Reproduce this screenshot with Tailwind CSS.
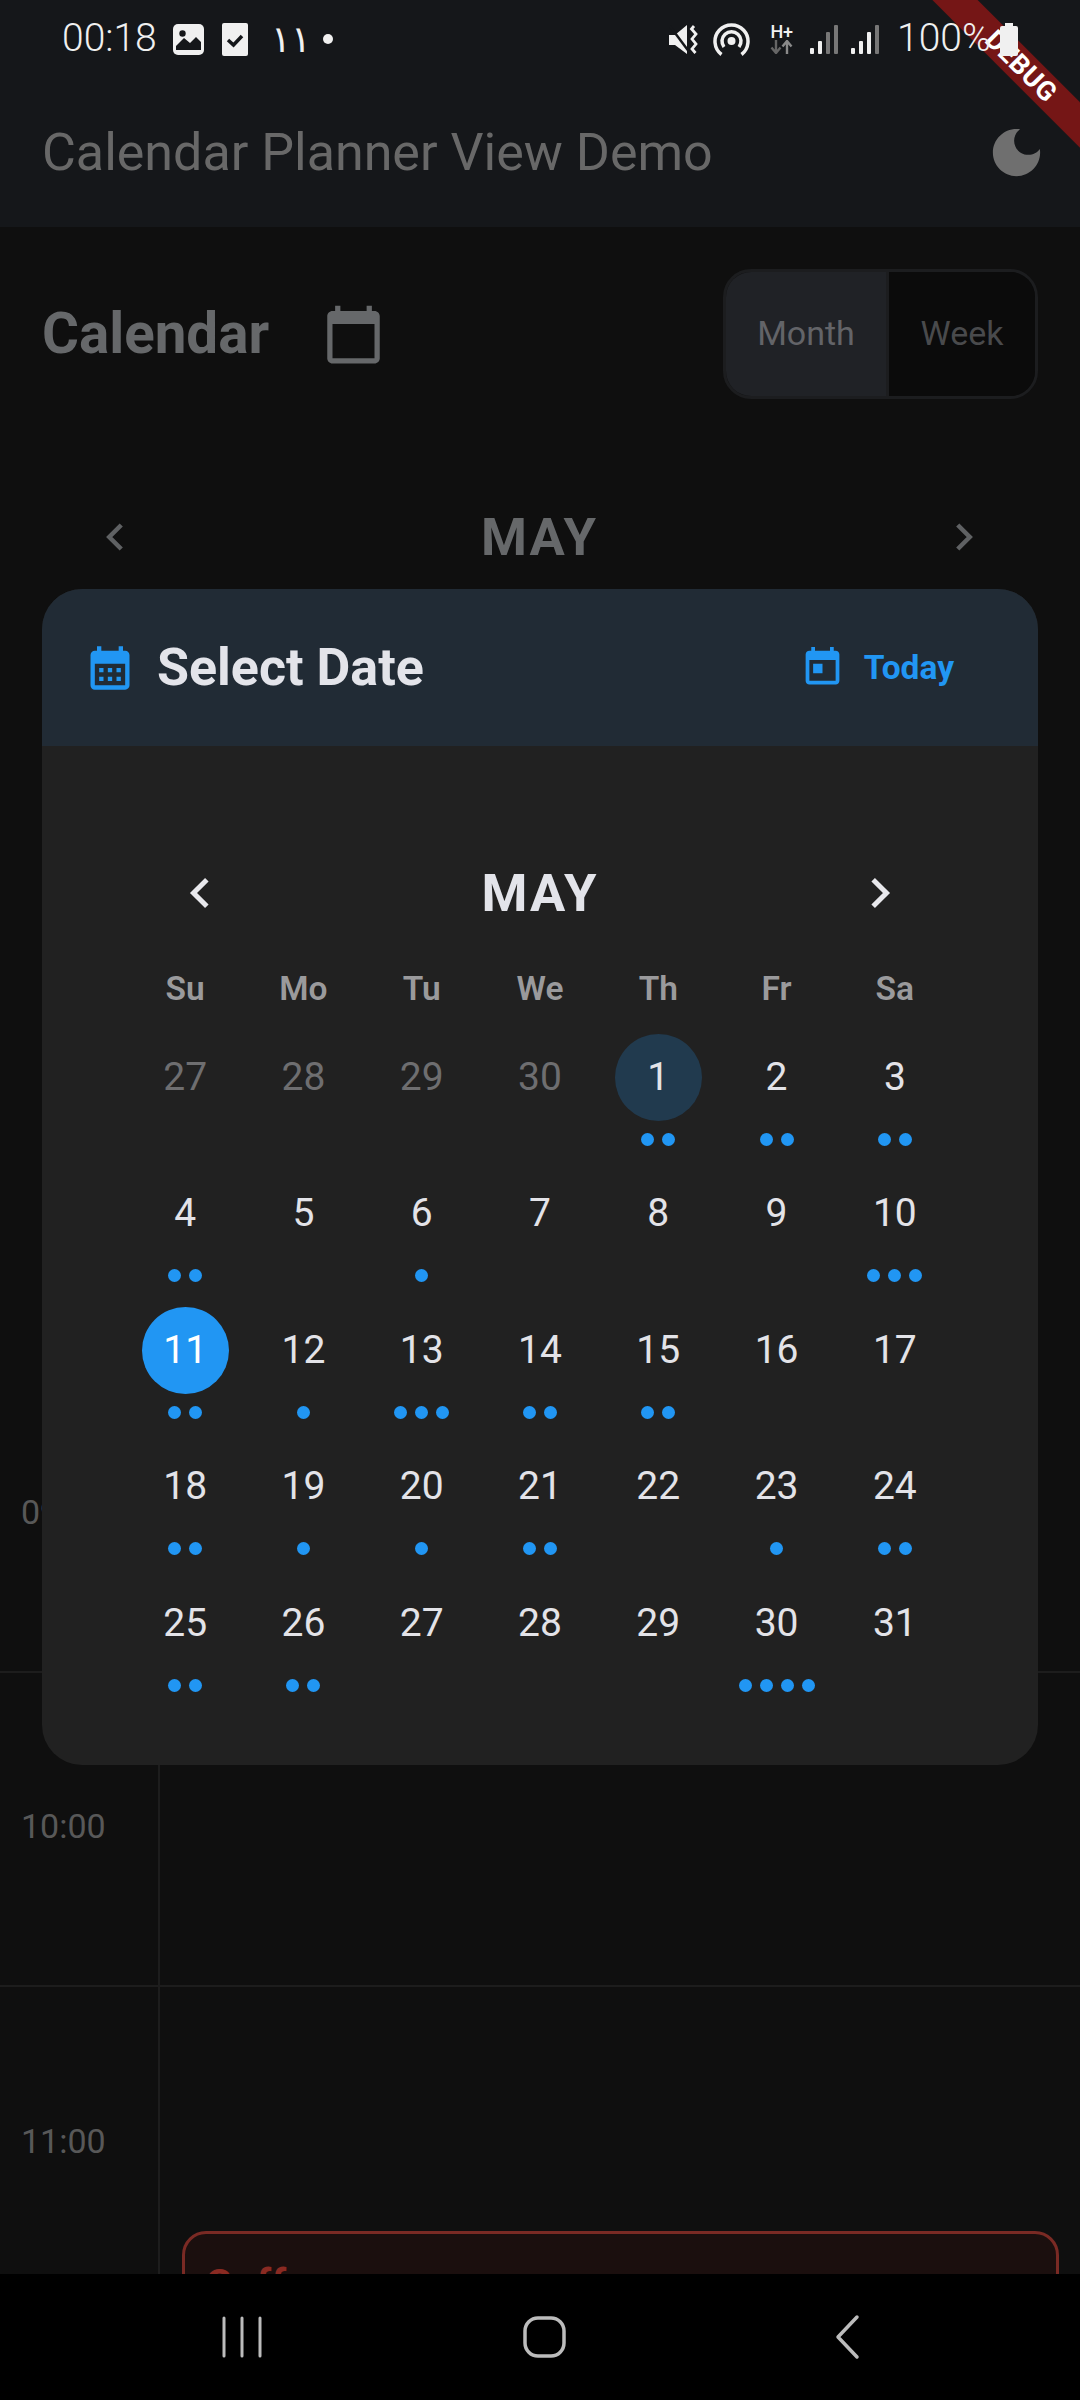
<!doctype html>
<html>
<head>
<meta charset="utf-8">
<script src="https://cdn.jsdelivr.net/npm/@tailwindcss/browser@4"></script>
</head>
<body class="bg-[#0e0e0e]">
<div class="relative w-[1080px] h-[2400px] overflow-hidden flex flex-col bg-[#0f0f0f] font-['Roboto',sans-serif]">

  <!-- status + app bar -->
  <div class="bg-[#15171a] h-[227px] shrink-0 flex flex-col">
    <div class="relative z-20 h-[78px] flex items-center justify-between pl-[62px] text-[#f0f0f0]">
      <div class="flex items-center">
        <span class="text-[39px] leading-none font-light w-[95px] mt-[-2px]">00:18</span>
        <svg class="ml-[16px]" width="31" height="31" viewBox="0 0 31 31"><rect width="31" height="31" rx="5" fill="#f0f0f0"/><path d="M3 26 V22 L11 14 L17 19 L23 13 L28 18 V26 Z" fill="#15171a"/><circle cx="9.5" cy="9.5" r="3.2" fill="#15171a"/></svg>
        <svg class="ml-[18px]" width="26" height="33" viewBox="0 0 26 33"><rect width="26" height="33" rx="2" fill="#f0f0f0"/><path d="M6 17 L11.5 22 L20 13" fill="none" stroke="#15171a" stroke-width="3.5"/></svg>
        <span class="ml-[23px] w-[30px] text-[37px] leading-none font-extralight tracking-[-5px] font-['DejaVu_Sans',sans-serif]">١١</span>
        <span class="ml-[22px] w-[10px] h-[10px] rounded-full bg-[#f0f0f0]"></span>
      </div>
      <div class="flex items-center mr-[62px]">
        <svg width="29" height="29" viewBox="0 0 29 29"><path d="M0 10 H6 L18 0 V29 L6 20 H0 Z" fill="#f0f0f0"/><path d="M0 0 L21 28" stroke="#15171a" stroke-width="2.5"/><path d="M25 1 L22.5 4 L27 9 L23 14 L27 19 L23 24 L26.5 28" fill="none" stroke="#f0f0f0" stroke-width="2.8"/></svg>
        <svg class="ml-[15px]" width="37" height="33" viewBox="0 0 37 33"><circle cx="18.5" cy="18" r="4" fill="#f0f0f0"/><path d="M11 24 A9.5 9.5 0 1 1 26 24" fill="none" stroke="#f0f0f0" stroke-width="3.5"/><path d="M8.5 31.5 A16.5 16.5 0 1 1 28.5 31.5" fill="none" stroke="#f0f0f0" stroke-width="3.5"/></svg>
        <div class="ml-[20px] w-[23px] flex flex-col items-center">
          <span class="text-[18px] leading-[16px] font-medium text-[#f0f0f0] tracking-[-0.5px]">H+</span>
          <svg width="23" height="14" viewBox="0 0 23 14"><path d="M6 0 V12 M1.5 7.5 L6 13 L10.5 7.5" fill="none" stroke="#666" stroke-width="2.4"/><path d="M17 14 V2 M12.5 6.5 L17 1 L21.5 6.5" fill="none" stroke="#8a8a8a" stroke-width="2.4"/></svg>
        </div>
        <svg class="ml-[17px]" width="28" height="29" viewBox="0 0 28 29"><rect x="0" y="23" width="4" height="6" rx="1" fill="#f0f0f0"/><rect x="8" y="16" width="4" height="13" rx="1" fill="#f0f0f0"/><rect x="16" y="7" width="4" height="22" rx="1" fill="#777"/><rect x="24" y="0" width="4" height="29" rx="1" fill="#777"/></svg>
        <svg class="ml-[13px]" width="28" height="29" viewBox="0 0 28 29"><rect x="0" y="23" width="4" height="6" rx="1" fill="#f0f0f0"/><rect x="8" y="16" width="4" height="13" rx="1" fill="#f0f0f0"/><rect x="16" y="7" width="4" height="22" rx="1" fill="#f0f0f0"/><rect x="24" y="0" width="4" height="29" rx="1" fill="#777"/></svg>
        <span class="ml-[18px] text-[39px] leading-none font-light w-[91px] mt-[-2px] whitespace-nowrap">100%</span>
        <svg class="ml-[12px]" width="18" height="33" viewBox="0 0 18 33"><path d="M5 0 H13 V3 H16 A2 2 0 0 1 18 5 V31 A2 2 0 0 1 16 33 H2 A2 2 0 0 1 0 31 V5 A2 2 0 0 1 2 3 H5 Z" fill="#f0f0f0"/></svg>
      </div>
    </div>
    <div class="h-[149px] flex items-center justify-between pl-[42px] pr-[32px]">
      <span class="text-[52px] leading-none text-[#686868] mt-[1px]">Calendar Planner View Demo</span>
      <svg width="63" height="63" viewBox="0 0 24 24" fill="#6f6f6f"><path d="M12 3c-4.97 0-9 4.03-9 9s4.03 9 9 9 9-4.03 9-9c0-.46-.04-.92-.1-1.36-.98 1.37-2.58 2.26-4.4 2.26-2.98 0-5.4-2.42-5.4-5.4 0-1.81.89-3.42 2.26-4.4-.44-.06-.9-.1-1.36-.1z"/></svg>
    </div>
  </div>

  <!-- calendar heading -->
  <div class="h-[130px] mt-[42px] shrink-0 flex items-center justify-between px-[42px]">
    <div class="flex items-center">
      <span class="text-[56.5px] leading-none font-bold text-[#66686a]">Calendar</span>
      <svg class="ml-[53px]" width="63" height="63" viewBox="0 0 24 24" fill="#66686a"><path d="M20 3h-1V1h-2v2H7V1H5v2H4c-1.1 0-2 .9-2 2v16c0 1.1.9 2 2 2h16c1.1 0 2-.9 2-2V5c0-1.1-.9-2-2-2zm0 18H4V8h16v13z"/></svg>
    </div>
    <div class="w-[315px] h-[130px] flex rounded-[28px] border-[3px] border-[#1c1d1f] overflow-hidden">
      <div class="w-[163px] pb-[2px] flex items-center justify-center bg-[#202226] text-[34px] text-[#636468] border-r-[3px] border-[#1c1d1f]">Month</div>
      <div class="flex-1 pb-[2px] flex items-center justify-center bg-[#0b0b0b] text-[34px] text-[#494a4c]">Week</div>
    </div>
  </div>

  <!-- month nav behind dialog -->
  <div class="h-[70px] mt-[103px] shrink-0 flex items-center justify-between pl-[98px] pr-[99px]">
    <svg width="36" height="36" viewBox="0 0 24 24" fill="none" stroke="#5f6163" stroke-width="3"><path d="M15.5 4 L7.5 12 L15.5 20"/></svg>
    <span class="text-[52.5px] leading-none font-bold tracking-[2px] text-[#66686a]">MAY</span>
    <svg width="36" height="36" viewBox="0 0 24 24" fill="none" stroke="#5f6163" stroke-width="3"><path d="M8.5 4 L16.5 12 L8.5 20"/></svg>
  </div>

  <!-- timeline -->
  <div class="mt-[787px] shrink-0">
    <div class="flex h-[314px] border-b-[2px] border-[#1d1d1d]">
      <div class="w-[160px] pb-[5px] border-r-[2px] border-[#1d1d1d] flex items-center pl-[21px] text-[34px] text-[#585858]">09:00</div>
      <div class="flex-1"></div>
    </div>
    <div class="flex h-[314px] border-b-[2px] border-[#1d1d1d]">
      <div class="w-[160px] pb-[5px] border-r-[2px] border-[#1d1d1d] flex items-center pl-[21px] text-[34px] text-[#585858]">10:00</div>
      <div class="flex-1"></div>
    </div>
    <div class="relative flex h-[314px]">
      <div class="w-[160px] pb-[5px] border-r-[2px] border-[#1d1d1d] flex items-center pl-[21px] text-[34px] text-[#585858]">11:00</div>
      <div class="flex-1"></div>
      <div class="absolute left-[182px] top-[244px] w-[877px] h-[120px] rounded-[24px] border-[3px] border-[#7a2a24] bg-[#1b0f0e] pl-[20px] pt-[26px] text-[42px] leading-[50px] font-semibold text-[#8a2a22]">Coffee</div>
    </div>
  </div>

  <!-- dialog -->
  <div class="absolute left-[42px] top-[589px] w-[996px] h-[1176px] rounded-[40px] overflow-hidden bg-[#212121] flex flex-col">
    <div class="h-[157px] shrink-0 bg-[#212b35] flex items-center justify-between pl-[42px] pr-[84px]">
      <div class="flex items-center">
        <svg width="52" height="52" viewBox="0 0 24 24" fill="#2196f3"><path d="M19 4h-1V2h-2v2H8V2H6v2H5c-1.11 0-1.99.9-1.99 2L3 20a2 2 0 0 0 2 2h14c1.1 0 2-.9 2-2V6c0-1.1-.9-2-2-2zm0 16H5V10h14v10zM9 14H7v-2h2v2zm4 0h-2v-2h2v2zm4 0h-2v-2h2v2zm-8 4H7v-2h2v2zm4 0h-2v-2h2v2zm4 0h-2v-2h2v2z"/></svg>
        <span class="ml-[21px] text-[52px] leading-none font-bold text-[#e3e4ea]">Select Date</span>
      </div>
      <div class="flex items-center">
        <svg width="45" height="45" viewBox="0 0 24 24" fill="#2196f3"><path d="M19 3h-1V1h-2v2H8V1H6v2H5c-1.11 0-1.99.9-1.99 2L3 19c0 1.1.89 2 2 2h14c1.1 0 2-.9 2-2V5c0-1.1-.9-2-2-2zm0 16H5V8h14v11zM7 10h5v5H7z"/></svg>
        <span class="ml-[19px] text-[33.5px] leading-none font-bold text-[#2196f3]">Today</span>
      </div>
    </div>
    <div class="flex flex-col pt-[105px] px-[84px]">
      <div class="h-[84px] flex items-center justify-between pl-[55px] pr-[55px]">
        <svg width="40" height="40" viewBox="0 0 24 24" fill="none" stroke="#e8e8ec" stroke-width="3"><path d="M15.5 4 L7.5 12 L15.5 20"/></svg>
        <span class="text-[52.5px] leading-none font-bold tracking-[2px] text-[#e3e4ea]">MAY</span>
        <svg width="40" height="40" viewBox="0 0 24 24" fill="none" stroke="#e8e8ec" stroke-width="3"><path d="M8.5 4 L16.5 12 L8.5 20"/></svg>
      </div>
      <div class="mt-[26px] h-[56px] grid grid-cols-7 items-center text-center text-[33.5px] font-semibold text-[#9a9a9c]">
        <span>Su</span><span>Mo</span><span>Tu</span><span>We</span><span>Th</span><span>Fr</span><span>Sa</span>
      </div>
      <div class="mt-[16.5px] grid grid-cols-7 auto-rows-[136.5px] text-[39px] font-normal text-[#e3e3e8]">
        <!-- row 1 -->
        <div class="flex flex-col items-center"><div class="w-[87px] h-[87px] flex items-center justify-center text-[#6e6e70]">27</div></div>
        <div class="flex flex-col items-center"><div class="w-[87px] h-[87px] flex items-center justify-center text-[#6e6e70]">28</div></div>
        <div class="flex flex-col items-center"><div class="w-[87px] h-[87px] flex items-center justify-center text-[#6e6e70]">29</div></div>
        <div class="flex flex-col items-center"><div class="w-[87px] h-[87px] flex items-center justify-center text-[#6e6e70]">30</div></div>
        <div class="flex flex-col items-center"><div class="w-[87px] h-[87px] rounded-full bg-[#213a4e] flex items-center justify-center">1</div><div class="mt-[12px] flex gap-[8px]"><i class="w-[13px] h-[13px] rounded-full bg-[#2196f3]"></i><i class="w-[13px] h-[13px] rounded-full bg-[#2196f3]"></i></div></div>
        <div class="flex flex-col items-center"><div class="w-[87px] h-[87px] flex items-center justify-center">2</div><div class="mt-[12px] flex gap-[8px]"><i class="w-[13px] h-[13px] rounded-full bg-[#2196f3]"></i><i class="w-[13px] h-[13px] rounded-full bg-[#2196f3]"></i></div></div>
        <div class="flex flex-col items-center"><div class="w-[87px] h-[87px] flex items-center justify-center">3</div><div class="mt-[12px] flex gap-[8px]"><i class="w-[13px] h-[13px] rounded-full bg-[#2196f3]"></i><i class="w-[13px] h-[13px] rounded-full bg-[#2196f3]"></i></div></div>
        <!-- row 2 -->
        <div class="flex flex-col items-center"><div class="w-[87px] h-[87px] flex items-center justify-center">4</div><div class="mt-[12px] flex gap-[8px]"><i class="w-[13px] h-[13px] rounded-full bg-[#2196f3]"></i><i class="w-[13px] h-[13px] rounded-full bg-[#2196f3]"></i></div></div>
        <div class="flex flex-col items-center"><div class="w-[87px] h-[87px] flex items-center justify-center">5</div></div>
        <div class="flex flex-col items-center"><div class="w-[87px] h-[87px] flex items-center justify-center">6</div><div class="mt-[12px] flex gap-[8px]"><i class="w-[13px] h-[13px] rounded-full bg-[#2196f3]"></i></div></div>
        <div class="flex flex-col items-center"><div class="w-[87px] h-[87px] flex items-center justify-center">7</div></div>
        <div class="flex flex-col items-center"><div class="w-[87px] h-[87px] flex items-center justify-center">8</div></div>
        <div class="flex flex-col items-center"><div class="w-[87px] h-[87px] flex items-center justify-center">9</div></div>
        <div class="flex flex-col items-center"><div class="w-[87px] h-[87px] flex items-center justify-center">10</div><div class="mt-[12px] flex gap-[8px]"><i class="w-[13px] h-[13px] rounded-full bg-[#2196f3]"></i><i class="w-[13px] h-[13px] rounded-full bg-[#2196f3]"></i><i class="w-[13px] h-[13px] rounded-full bg-[#2196f3]"></i></div></div>
        <!-- row 3 -->
        <div class="flex flex-col items-center"><div class="w-[87px] h-[87px] rounded-full bg-[#2196f3] text-white flex items-center justify-center">11</div><div class="mt-[12px] flex gap-[8px]"><i class="w-[13px] h-[13px] rounded-full bg-[#2196f3]"></i><i class="w-[13px] h-[13px] rounded-full bg-[#2196f3]"></i></div></div>
        <div class="flex flex-col items-center"><div class="w-[87px] h-[87px] flex items-center justify-center">12</div><div class="mt-[12px] flex gap-[8px]"><i class="w-[13px] h-[13px] rounded-full bg-[#2196f3]"></i></div></div>
        <div class="flex flex-col items-center"><div class="w-[87px] h-[87px] flex items-center justify-center">13</div><div class="mt-[12px] flex gap-[8px]"><i class="w-[13px] h-[13px] rounded-full bg-[#2196f3]"></i><i class="w-[13px] h-[13px] rounded-full bg-[#2196f3]"></i><i class="w-[13px] h-[13px] rounded-full bg-[#2196f3]"></i></div></div>
        <div class="flex flex-col items-center"><div class="w-[87px] h-[87px] flex items-center justify-center">14</div><div class="mt-[12px] flex gap-[8px]"><i class="w-[13px] h-[13px] rounded-full bg-[#2196f3]"></i><i class="w-[13px] h-[13px] rounded-full bg-[#2196f3]"></i></div></div>
        <div class="flex flex-col items-center"><div class="w-[87px] h-[87px] flex items-center justify-center">15</div><div class="mt-[12px] flex gap-[8px]"><i class="w-[13px] h-[13px] rounded-full bg-[#2196f3]"></i><i class="w-[13px] h-[13px] rounded-full bg-[#2196f3]"></i></div></div>
        <div class="flex flex-col items-center"><div class="w-[87px] h-[87px] flex items-center justify-center">16</div></div>
        <div class="flex flex-col items-center"><div class="w-[87px] h-[87px] flex items-center justify-center">17</div></div>
        <!-- row 4 -->
        <div class="flex flex-col items-center"><div class="w-[87px] h-[87px] flex items-center justify-center">18</div><div class="mt-[12px] flex gap-[8px]"><i class="w-[13px] h-[13px] rounded-full bg-[#2196f3]"></i><i class="w-[13px] h-[13px] rounded-full bg-[#2196f3]"></i></div></div>
        <div class="flex flex-col items-center"><div class="w-[87px] h-[87px] flex items-center justify-center">19</div><div class="mt-[12px] flex gap-[8px]"><i class="w-[13px] h-[13px] rounded-full bg-[#2196f3]"></i></div></div>
        <div class="flex flex-col items-center"><div class="w-[87px] h-[87px] flex items-center justify-center">20</div><div class="mt-[12px] flex gap-[8px]"><i class="w-[13px] h-[13px] rounded-full bg-[#2196f3]"></i></div></div>
        <div class="flex flex-col items-center"><div class="w-[87px] h-[87px] flex items-center justify-center">21</div><div class="mt-[12px] flex gap-[8px]"><i class="w-[13px] h-[13px] rounded-full bg-[#2196f3]"></i><i class="w-[13px] h-[13px] rounded-full bg-[#2196f3]"></i></div></div>
        <div class="flex flex-col items-center"><div class="w-[87px] h-[87px] flex items-center justify-center">22</div></div>
        <div class="flex flex-col items-center"><div class="w-[87px] h-[87px] flex items-center justify-center">23</div><div class="mt-[12px] flex gap-[8px]"><i class="w-[13px] h-[13px] rounded-full bg-[#2196f3]"></i></div></div>
        <div class="flex flex-col items-center"><div class="w-[87px] h-[87px] flex items-center justify-center">24</div><div class="mt-[12px] flex gap-[8px]"><i class="w-[13px] h-[13px] rounded-full bg-[#2196f3]"></i><i class="w-[13px] h-[13px] rounded-full bg-[#2196f3]"></i></div></div>
        <!-- row 5 -->
        <div class="flex flex-col items-center"><div class="w-[87px] h-[87px] flex items-center justify-center">25</div><div class="mt-[12px] flex gap-[8px]"><i class="w-[13px] h-[13px] rounded-full bg-[#2196f3]"></i><i class="w-[13px] h-[13px] rounded-full bg-[#2196f3]"></i></div></div>
        <div class="flex flex-col items-center"><div class="w-[87px] h-[87px] flex items-center justify-center">26</div><div class="mt-[12px] flex gap-[8px]"><i class="w-[13px] h-[13px] rounded-full bg-[#2196f3]"></i><i class="w-[13px] h-[13px] rounded-full bg-[#2196f3]"></i></div></div>
        <div class="flex flex-col items-center"><div class="w-[87px] h-[87px] flex items-center justify-center">27</div></div>
        <div class="flex flex-col items-center"><div class="w-[87px] h-[87px] flex items-center justify-center">28</div></div>
        <div class="flex flex-col items-center"><div class="w-[87px] h-[87px] flex items-center justify-center">29</div></div>
        <div class="flex flex-col items-center"><div class="w-[87px] h-[87px] flex items-center justify-center">30</div><div class="mt-[12px] flex gap-[8px]"><i class="w-[13px] h-[13px] rounded-full bg-[#2196f3]"></i><i class="w-[13px] h-[13px] rounded-full bg-[#2196f3]"></i><i class="w-[13px] h-[13px] rounded-full bg-[#2196f3]"></i><i class="w-[13px] h-[13px] rounded-full bg-[#2196f3]"></i></div></div>
        <div class="flex flex-col items-center"><div class="w-[87px] h-[87px] flex items-center justify-center">31</div></div>
      </div>
    </div>
  </div>

  <!-- debug ribbon -->
  <div class="absolute z-10 left-[869px] top-[48px] w-[300px] h-[32px] rotate-45 bg-[#751616] flex items-center justify-center pl-[6px] text-[27px] leading-none font-bold tracking-[0.5px] text-white">DEBUG</div>

  <!-- nav bar -->
  <div class="absolute z-10 left-0 bottom-0 w-full h-[126px] bg-black">
    <svg width="1080" height="126" viewBox="0 0 1080 126" fill="none" stroke="#bcbcbc">
      <path d="M224 44 V82 M242 44 V82 M260 44 V82" stroke-width="3" stroke-linecap="round"/>
      <rect x="525" y="44" width="39" height="38" rx="13" stroke-width="3.5"/>
      <path d="M857 43 L838 63 L857 83" stroke-width="3.5" stroke-linecap="round" stroke-linejoin="round"/>
    </svg>
  </div>
</div>
</body>
</html>
